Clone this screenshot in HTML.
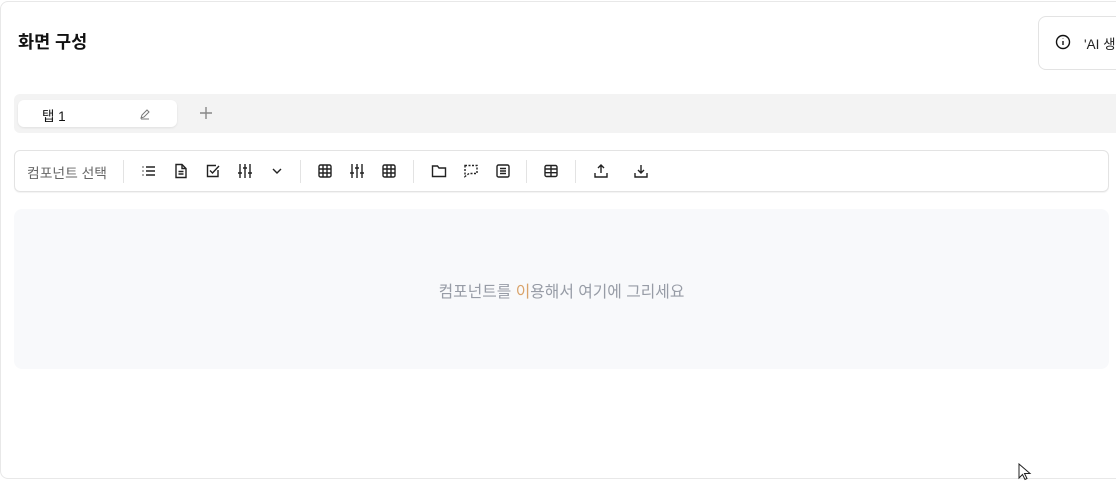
<!DOCTYPE html>
<html><head><meta charset="utf-8"><style>
*{box-sizing:border-box;margin:0;padding:0}
body{width:1116px;height:480px;overflow:hidden;background:#fff;font-family:"Liberation Sans","Noto Sans CJK KR",sans-serif;position:relative}
.frame{position:absolute;left:0px;top:1px;width:1200px;height:478px;border:1px solid #e8e8e8;border-radius:8px}
.title{position:absolute;left:18px;top:29px;font-size:17.5px;font-weight:700;color:#111}
.info{position:absolute;left:1038px;top:16px;width:120px;height:54px;border:1px solid #e3e3e3;border-radius:8px}
.info span{position:absolute;left:45px;top:16px;font-size:13.5px;color:#222}
.tabs{position:absolute;left:14px;top:94px;width:1110px;height:39px;background:#f3f3f3;border-radius:6px 0 0 6px}
.tab{position:absolute;left:4px;top:6px;width:159px;height:27px;background:#fff;border-radius:6px;box-shadow:0 1px 2px rgba(0,0,0,.08)}
.tab span{position:absolute;left:24px;top:5px;font-size:13.5px;color:#111}
.tb{position:absolute;left:14px;top:150px;width:1095px;height:42px;border:1px solid #e3e3e3;border-radius:6px;box-shadow:0 1px 1px rgba(0,0,0,.05)}
.tb .lbl{position:absolute;left:12px;top:11px;font-size:13.8px;color:#666}
.dv{position:absolute;top:9px;width:1px;height:23px;background:#e3e3e3}
.ic{position:absolute;top:12px}
.canvas{position:absolute;left:14px;top:209px;width:1095px;height:160px;background:#f8f9fb;border-radius:8px}
.canvas p{position:absolute;left:0;right:0;top:70px;text-align:center;font-size:15.8px;color:#979ca6}
</style></head><body>
<div class="frame"></div>
<div class="title">화면 구성</div>
<div class="info"><svg style="position:absolute;left:16px;top:17px" width="16" height="16" viewBox="0 0 16 16" fill="none" stroke="#111" stroke-width="1.4"><circle cx="8" cy="8" r="6.5"/><path d="M8 7v4M8 4.6v.4"/></svg><span>'AI 생성</span></div>
<div class="tabs"><div class="tab"><span>탭 1</span>
<svg style="position:absolute;left:121px;top:8px" width="12" height="12" viewBox="0 0 12 12" fill="none" stroke="#777" stroke-width="1"><path d="M2 10l1-3 5-5 2 2-5 5z M2 11h8"/></svg></div>
<svg style="position:absolute;left:186px;top:13px" width="12" height="12" viewBox="0 0 12 12" stroke="#888" stroke-width="1.4"><path d="M6 0v12M0 6h12"/></svg></div>
<div class="tb"><span class="lbl">컴포넌트 선택</span>
<div class="dv" style="left:108px"></div><div class="dv" style="left:285px"></div><div class="dv" style="left:398px"></div><div class="dv" style="left:511px"></div><div class="dv" style="left:560px"></div>
<svg class="ic" style="left:126px" width="16" height="16" viewBox="0 0 16 16" fill="none" stroke="#222" stroke-width="1.4"><path d="M5 4h9M5 8h9M5 12h9M1.5 4h1M1.5 8h1M1.5 12h1"/></svg>
<svg class="ic" style="left:158px" width="16" height="16" viewBox="0 0 16 16" fill="none" stroke="#222" stroke-width="1.4"><path d="M3 1.5h6l4 4v9H3z M9 1.5v4h4 M5.5 8.5h5M5.5 11h5"/></svg>
<svg class="ic" style="left:190px" width="16" height="16" viewBox="0 0 16 16" fill="none" stroke="#222" stroke-width="1.4"><path d="M13 7v6.5H2.5V2.5H11 M5 7.5l2.5 2.5L14 3"/></svg>
<svg class="ic" style="left:222px" width="16" height="16" viewBox="0 0 16 16" fill="none" stroke="#222" stroke-width="1.4"><path d="M3 1v14M8 1v14M13 1v14M1 10h4M6 5h4M11 10h4"/></svg>
<svg class="ic" style="left:254px" width="16" height="16" viewBox="0 0 16 16" fill="none" stroke="#222" stroke-width="1.4"><path d="M4 6l4 4 4-4"/></svg>
<svg class="ic" style="left:302px" width="16" height="16" viewBox="0 0 16 16" fill="none" stroke="#222" stroke-width="1.4"><rect x="2" y="2" width="12" height="12" rx="1.5"/><path d="M6 2v12M10 2v12M2 6h12M2 10h12"/></svg>
<svg class="ic" style="left:334px" width="16" height="16" viewBox="0 0 16 16" fill="none" stroke="#222" stroke-width="1.4"><path d="M3 1v14M8 1v14M13 1v14M1 10h4M6 5h4M11 10h4"/></svg>
<svg class="ic" style="left:366px" width="16" height="16" viewBox="0 0 16 16" fill="none" stroke="#222" stroke-width="1.4"><rect x="2" y="2" width="12" height="12" rx="1.5"/><path d="M6 2v12M10 2v12M2 6h12M2 10h12"/></svg>
<svg class="ic" style="left:416px" width="16" height="16" viewBox="0 0 16 16" fill="none" stroke="#222" stroke-width="1.4"><path d="M1.5 3h5l1.5 2h6.5v8.5h-13z"/></svg>
<svg class="ic" style="left:448px" width="16" height="16" viewBox="0 0 16 16" fill="none" stroke="#222" stroke-width="1.4" stroke-dasharray="2 1.5"><path d="M2 2.5h12v8H6l-4 3z"/></svg>
<svg class="ic" style="left:480px" width="16" height="16" viewBox="0 0 16 16" fill="none" stroke="#222" stroke-width="1.4"><rect x="2" y="2" width="12" height="12" rx="1.5"/><path d="M5 5.5h6M5 8h6M5 10.5h6"/></svg>
<svg class="ic" style="left:528px" width="16" height="16" viewBox="0 0 16 16" fill="none" stroke="#222" stroke-width="1.4"><rect x="2" y="2.5" width="12" height="11" rx="1.5"/><path d="M2 6h12M2 9.7h12M8 2.5v11"/></svg>
<svg class="ic" style="left:578px" width="16" height="16" viewBox="0 0 16 16" fill="none" stroke="#222" stroke-width="1.4"><path d="M8 10V2M5 5l3-3 3 3M2 10v4h12v-4"/></svg>
<svg class="ic" style="left:618px" width="16" height="16" viewBox="0 0 16 16" fill="none" stroke="#222" stroke-width="1.4"><path d="M8 2v8M5 7l3 3 3-3M2 10v4h12v-4"/></svg>
</div>
<div class="canvas"><p>컴포넌트를 <span style="color:#d9a36a">이</span>용해서 여기에 그리세요</p></div>
<svg style="position:absolute;left:1018px;top:463px" width="14" height="18" viewBox="0 0 14 18"><path d="M1 1v14l3.5-3.5 2.5 5 2-1-2.5-5H12z" fill="#fff" stroke="#222" stroke-width="1"/></svg>
</body></html>
